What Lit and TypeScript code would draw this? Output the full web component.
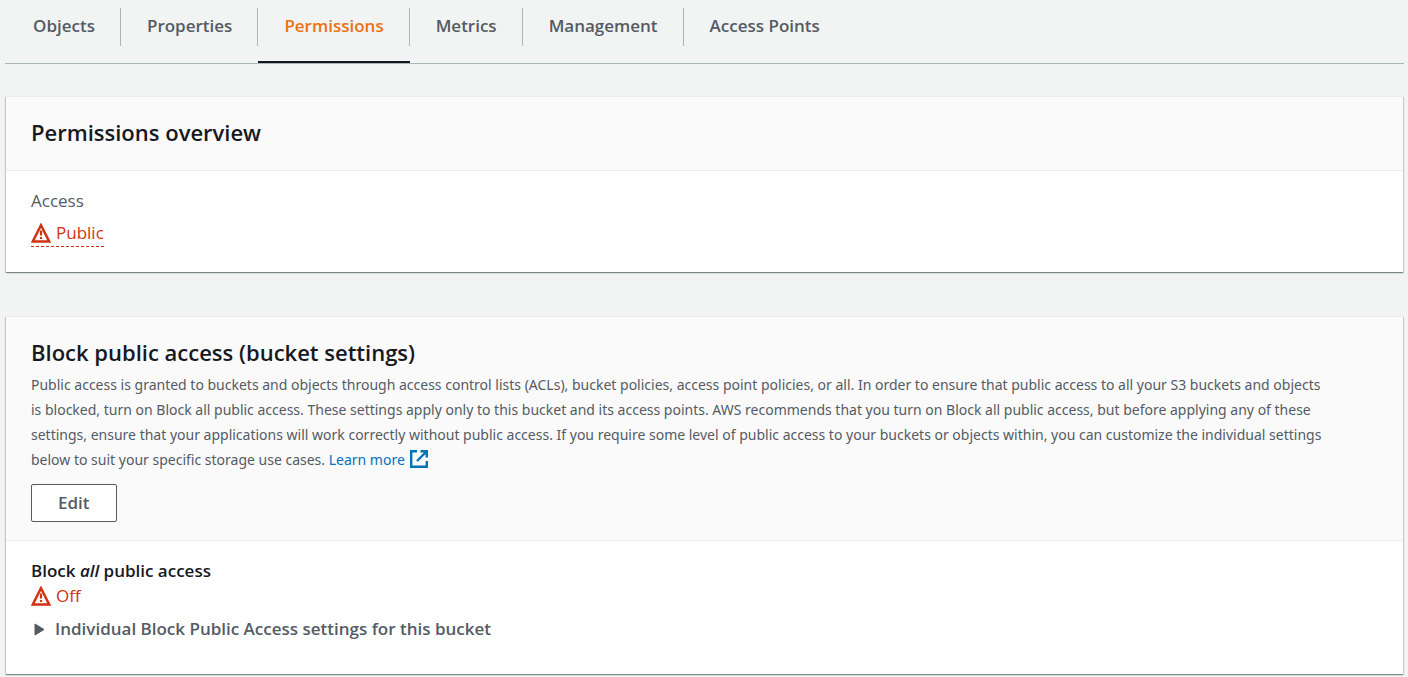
import { LitElement, html, css, svg } from "lit";
import { customElement, property, state } from "lit/decorators.js";
import { classMap } from "lit/directives/class-map.js";

const warningIcon = html`<svg class="warn" viewBox="0 0 20 20" aria-hidden="true">
  ${svg`<path d="M10 2.200 18.200 18.500H1.800Z" fill="none" stroke="currentColor" stroke-width="2.500"/>
  <path d="M10 7.500v5M10 14v2" fill="none" stroke="currentColor" stroke-width="2.200"/>`}
</svg>`;

const externalIcon = html`<svg class="external" viewBox="0 0 18 18" aria-hidden="true">
  ${svg`<path d="M7 1.200H1.200v15.600h15.600V11M10.500 1.200h6.300v6.300M16.500 1.500 7 11" fill="none" stroke="currentColor" stroke-width="2.400"/>`}
</svg>`;

@customElement("s3-card")
export class S3Card extends LitElement {
  static styles = css`
    :host {
      display: block;
      background: #fff;
      border-top: 1px solid #eaeded;
      box-shadow:
        0 1px 1px 0 rgba(0, 28, 36, 0.3),
        1px 1px 1px 0 rgba(0, 28, 36, 0.15),
        -1px 1px 1px 0 rgba(0, 28, 36, 0.15);
    }
    .header {
      padding: 19px 25px 18px;
      background: #fafafa;
      border-bottom: 1px solid #eaeded;
    }
    .body {
      padding: 17px 25px 25px;
    }
  `;

  render() {
    return html`
      <div class="header"><slot name="header"></slot></div>
      <div class="body"><slot></slot></div>
    `;
  }
}

@customElement("s3-tabs")
export class S3Tabs extends LitElement {
  @property({ type: Array }) tabs: string[] = [];
  @state() private active = "Permissions";

  static styles = css`
    .tabs {
      display: flex;
      height: 63px;
      padding-left: 2px;
      border-bottom: 1px solid #aab7b8;
    }
    .tab {
      box-sizing: border-box;
      display: flex;
      align-items: flex-start;
      padding: 8px 0 0;
      border: 0;
      border-bottom: 2px solid transparent;
      background: none;
      color: #545b64;
      font: 600 17px/36px "Open Sans", sans-serif;
      cursor: pointer;
    }
    .label {
      padding: 0 25px 0 26px;
      height: 38px;
      border-right: 1px solid #aab7b8;
    }
    .tab:last-child .label {
      border-right-color: transparent;
    }
    .tab.active {
      color: #ec7211;
      border-bottom-color: #16191f;
    }
  `;

  render() {
    return html`<div class="tabs" role="tablist">
      ${this.tabs.map(
        (t) => html`<button
          class=${classMap({ tab: true, active: t === this.active })}
          role="tab"
          aria-selected=${t === this.active}
          @click=${() => (this.active = t)}
        ><span class="label">${t}</span></button>`,
      )}
    </div>`;
  }
}

@customElement("app-root")
export class AppRoot extends LitElement {
  static styles = css`
    :host {
      display: flow-root;
      box-sizing: border-box;
      min-height: 100vh;
      padding: 0 4px 2px 5px;
      background: #f2f3f3;
      color: #16191f;
      font: 400 17px/24px "Open Sans", sans-serif;
    }
    .cards {
      display: grid;
      gap: 44px;
      padding: 32px 1px 0;
    }
    h2 {
      margin: 0 0 4px;
      font-size: 22px;
      font-weight: 600;
      line-height: 32px;
    }
    h3 {
      margin: 0;
      font-size: 17px;
      font-weight: 600;
      line-height: 26px;
    }
    .note {
      margin: 0 0 12px;
      padding-right: 48px;
      color: #545b64;
      font-family: "Noto Sans", sans-serif;
      font-size: 14px;
      line-height: 25px;
    }
    .link {
      color: #0073bb;
      text-decoration: none;
      white-space: nowrap;
    }
    .external {
      width: 18px;
      height: 18px;
      margin-left: 2px;
      vertical-align: -3px;
    }
    .edit {
      display: block;
      padding: 0 26px;
      border: 1px solid #545b64;
      border-radius: 2px;
      background: #fff;
      color: #545b64;
      font: 600 17px/36px "Open Sans", sans-serif;
      cursor: pointer;
    }
    .label {
      color: #545b64;
      line-height: 26px;
    }
    .status {
      display: flex;
      width: max-content;
      align-items: center;
      gap: 5px;
      color: #d13212;
    }
    .dashed {
      margin-top: 7px;
      padding-bottom: 1px;
      border-bottom: 1px dashed #d13212;
    }
    .warn {
      width: 20px;
      height: 20px;
    }
    .more {
      margin: 9px 0 8px;
      color: #545b64;
      font-weight: 600;
    }
    .summary {
      display: flex;
      align-items: center;
      gap: 10px;
      padding-left: 3px;
      list-style: none;
      cursor: pointer;
    }
    .caret {
      width: 11px;
      height: 13px;
    }
  `;

  render() {
    return html`
      <s3-tabs
        .tabs=${["Objects", "Properties", "Permissions", "Metrics", "Management", "Access Points"]}
      ></s3-tabs>
      <div class="cards">
        <s3-card>
          <h2 slot="header">Permissions overview</h2>
          <div class="label">Access</div>
          <div class="status dashed">${warningIcon}<span>Public</span></div>
        </s3-card>
        <s3-card>
          <div slot="header">
            <h2>Block public access (bucket settings)</h2>
            <p class="note">
              Public access is granted to buckets and objects through access control lists (ACLs), bucket policies, access point policies, or all. In order to ensure that public access to all your S3 buckets and objects is blocked, turn on Block all public access. These settings apply only to this bucket and its access points. AWS recommends that you turn on Block all public access, but before applying any of these settings, ensure that your applications will work correctly without public access. If you require some level of public access to your buckets or objects within, you can customize the individual settings below to suit your specific storage use cases.
              <a class="link" href="#learn-more">Learn more ${externalIcon}</a>
            </p>
            <button class="edit">Edit</button>
          </div>
          <h3>Block <em>all</em> public access</h3>
          <div class="status">${warningIcon}<span>Off</span></div>
          <details class="more">
            <summary class="summary">
              <svg class="caret" viewBox="0 0 11 13" aria-hidden="true">
                <path d="M1 1v11l9-5.500z" fill="currentColor" stroke="currentColor" stroke-linejoin="round" />
              </svg>
              Individual Block Public Access settings for this bucket
            </summary>
          </details>
        </s3-card>
      </div>
    `;
  }
}
